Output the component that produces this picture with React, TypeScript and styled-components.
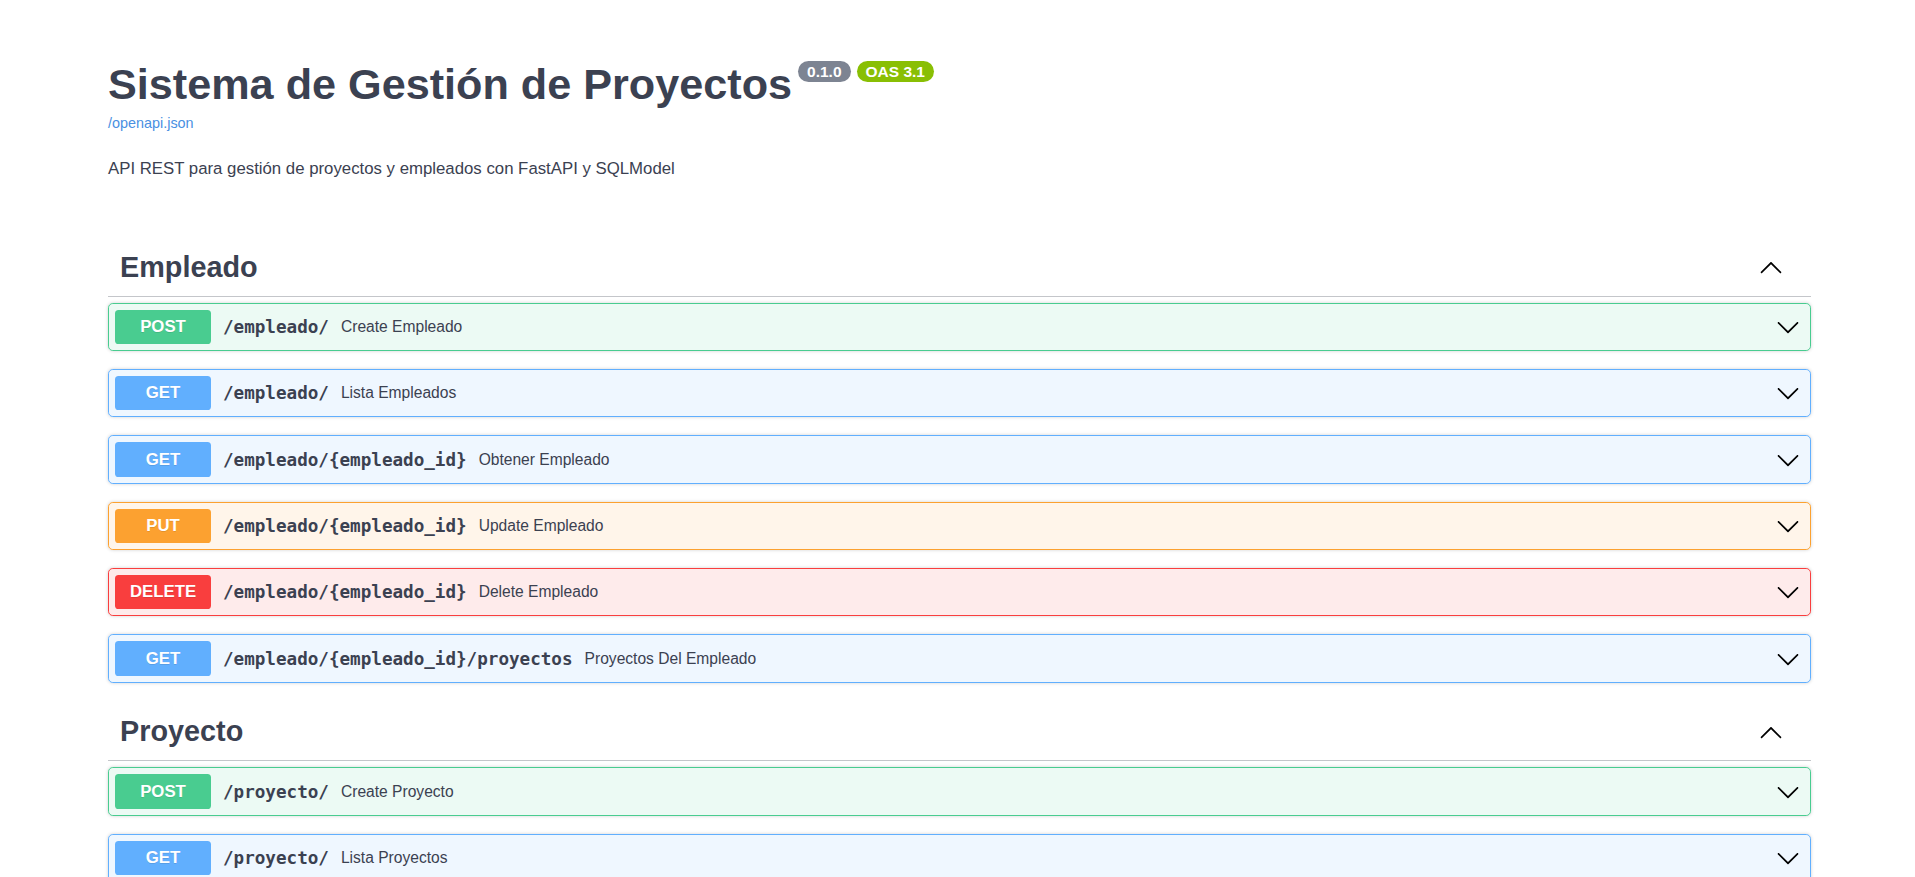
import React from 'react';
import styled, { createGlobalStyle } from 'styled-components';

const GlobalStyle = createGlobalStyle`
  html, body {
    margin: 0;
    padding: 0;
    background: #fff;
  }
  body {
    font-family: 'Liberation Sans', Arial, sans-serif;
    color: #3b4151;
  }
`;

type Method = 'GET' | 'POST' | 'PUT' | 'DELETE';

const methodColors: Record<Method, { main: string; bg: string }> = {
  GET: { main: '#61affe', bg: 'rgba(97, 175, 254, 0.1)' },
  POST: { main: '#49cc90', bg: 'rgba(73, 204, 144, 0.1)' },
  PUT: { main: '#fca130', bg: 'rgba(252, 161, 48, 0.1)' },
  DELETE: { main: '#f93e3e', bg: 'rgba(249, 62, 62, 0.1)' },
};

const Wrapper = styled.div`
  width: 1703px;
  margin: 0 0 0 108px;
`;

const Info = styled.div`
  margin: 60px 0;
`;

const MainGroup = styled.hgroup`
  margin: 0 0 27px;
`;

const Title = styled.h2`
  margin: 0;
  font-size: 43.2px;
  font-weight: 700;
  line-height: 49.6px;
  color: #3b4151;
`;

const Badge = styled.small<{ $bg: string }>`
  position: relative;
  top: -7px;
  display: inline-block;
  margin: 0 0 0 6px;
  padding: 2.4px 9px;
  font-size: 15.5px;
  line-height: 15.5px;
  font-weight: 700;
  vertical-align: super;
  border-radius: 68px;
  background: ${(p) => p.$bg};
  color: #fff;
`;

const SpecLink = styled.a`
  display: inline-block;
  margin-top: 5px;
  font-size: 14.4px;
  color: #4990e2;
  text-decoration: none;
`;

const Description = styled.p`
  margin: 0;
  font-size: 16.8px;
  color: #3b4151;
`;

const TagSection = styled.section`
  display: flex;
  flex-direction: column;

  & + & {
    margin-top: 2.5px;
  }
`;

const TagHeader = styled.h3`
  display: flex;
  align-items: center;
  margin: 0 0 6px;
  padding: 12px 24px 12px 12px;
  border-bottom: 1px solid rgba(59, 65, 81, 0.3);
  font-size: 28.8px;
  font-weight: 700;
  color: #3b4151;
`;

const TagName = styled.span`
  flex: 1;
`;

const ArrowButton = styled.span<{ $right: number }>`
  display: flex;
  align-items: center;
  margin-right: ${(p) => p.$right}px;
  color: #000;
`;

const Block = styled.div<{ $method: Method }>`
  margin: 0 0 18px;
  border: 1px solid ${(p) => methodColors[p.$method].main};
  border-radius: 4.8px;
  background: ${(p) => methodColors[p.$method].bg};
  box-shadow: 0 0 3.6px rgba(0, 0, 0, 0.19);
`;

const Summary = styled.div`
  display: flex;
  align-items: center;
  padding: 6px;
`;

const MethodTag = styled.span<{ $method: Method }>`
  min-width: 96px;
  padding: 7.2px 0;
  border-radius: 3.6px;
  background: ${(p) => methodColors[p.$method].main};
  color: #fff;
  font-size: 16.8px;
  font-weight: 700;
  text-align: center;
  text-shadow: 0 1px 0 rgba(0, 0, 0, 0.1);
`;

const Path = styled.span`
  padding: 0 12px;
  font-family: 'DejaVu Sans Mono', 'Liberation Mono', monospace;
  font-size: 17.6px;
  font-weight: 700;
  color: #3b4151;
`;

const Desc = styled.span`
  flex: 1;
  font-size: 15.6px;
  color: #3b4151;
`;

const ChevronDown = () => (
  <svg width="24" height="24" viewBox="0 0 20 20" fill="currentColor">
    <path d="M17.418 6.109c.272-.268.709-.268.979 0s.271.701 0 .969l-7.908 7.83c-.27.268-.707.268-.979 0l-7.908-7.83c-.27-.268-.27-.701 0-.969.271-.268.709-.268.979 0L10 13.25l7.418-7.141z" />
  </svg>
);

const ChevronUp = () => (
  <svg width="24" height="24" viewBox="0 0 20 20" fill="currentColor">
    <path d="M17.418 14.908c.272.268.709.268.979 0s.271-.701 0-.969l-7.908-7.83c-.27-.268-.707-.268-.979 0l-7.908 7.83c-.27.268-.27.701 0 .969.271.268.709.268.979 0L10 7.767l7.418 7.141z" />
  </svg>
);

interface Operation {
  method: Method;
  path: string;
  summary: string;
}

const sections: { tag: string; ops: Operation[] }[] = [
  {
    tag: 'Empleado',
    ops: [
      { method: 'POST', path: '/empleado/', summary: 'Create Empleado' },
      { method: 'GET', path: '/empleado/', summary: 'Lista Empleados' },
      { method: 'GET', path: '/empleado/{empleado_id}', summary: 'Obtener Empleado' },
      { method: 'PUT', path: '/empleado/{empleado_id}', summary: 'Update Empleado' },
      { method: 'DELETE', path: '/empleado/{empleado_id}', summary: 'Delete Empleado' },
      { method: 'GET', path: '/empleado/{empleado_id}/proyectos', summary: 'Proyectos Del Empleado' },
    ],
  },
  {
    tag: 'Proyecto',
    ops: [
      { method: 'POST', path: '/proyecto/', summary: 'Create Proyecto' },
      { method: 'GET', path: '/proyecto/', summary: 'Lista Proyectos' },
    ],
  },
];

const OperationRow = ({ op }: { op: Operation }) => (
  <Block $method={op.method}>
    <Summary>
      <MethodTag $method={op.method}>{op.method}</MethodTag>
      <Path>{op.path}</Path>
      <Desc>{op.summary}</Desc>
      <ArrowButton $right={4}>
        <ChevronDown />
      </ArrowButton>
    </Summary>
  </Block>
);

export default function App() {
  return (
    <>
      <GlobalStyle />
      <Wrapper>
        <Info>
          <MainGroup>
            <Title>
              Sistema de Gestión de Proyectos
              <Badge $bg="#7d8492">0.1.0</Badge>
              <Badge $bg="#89bf04">OAS 3.1</Badge>
            </Title>
            <SpecLink href="#">/openapi.json</SpecLink>
          </MainGroup>
          <Description>API REST para gestión de proyectos y empleados con FastAPI y SQLModel</Description>
        </Info>
        {sections.map((s) => (
          <TagSection key={s.tag}>
            <TagHeader>
              <TagName>{s.tag}</TagName>
              <ArrowButton $right={4}>
                <ChevronUp />
              </ArrowButton>
            </TagHeader>
            {s.ops.map((op, i) => (
              <OperationRow key={i} op={op} />
            ))}
          </TagSection>
        ))}
      </Wrapper>
    </>
  );
}
